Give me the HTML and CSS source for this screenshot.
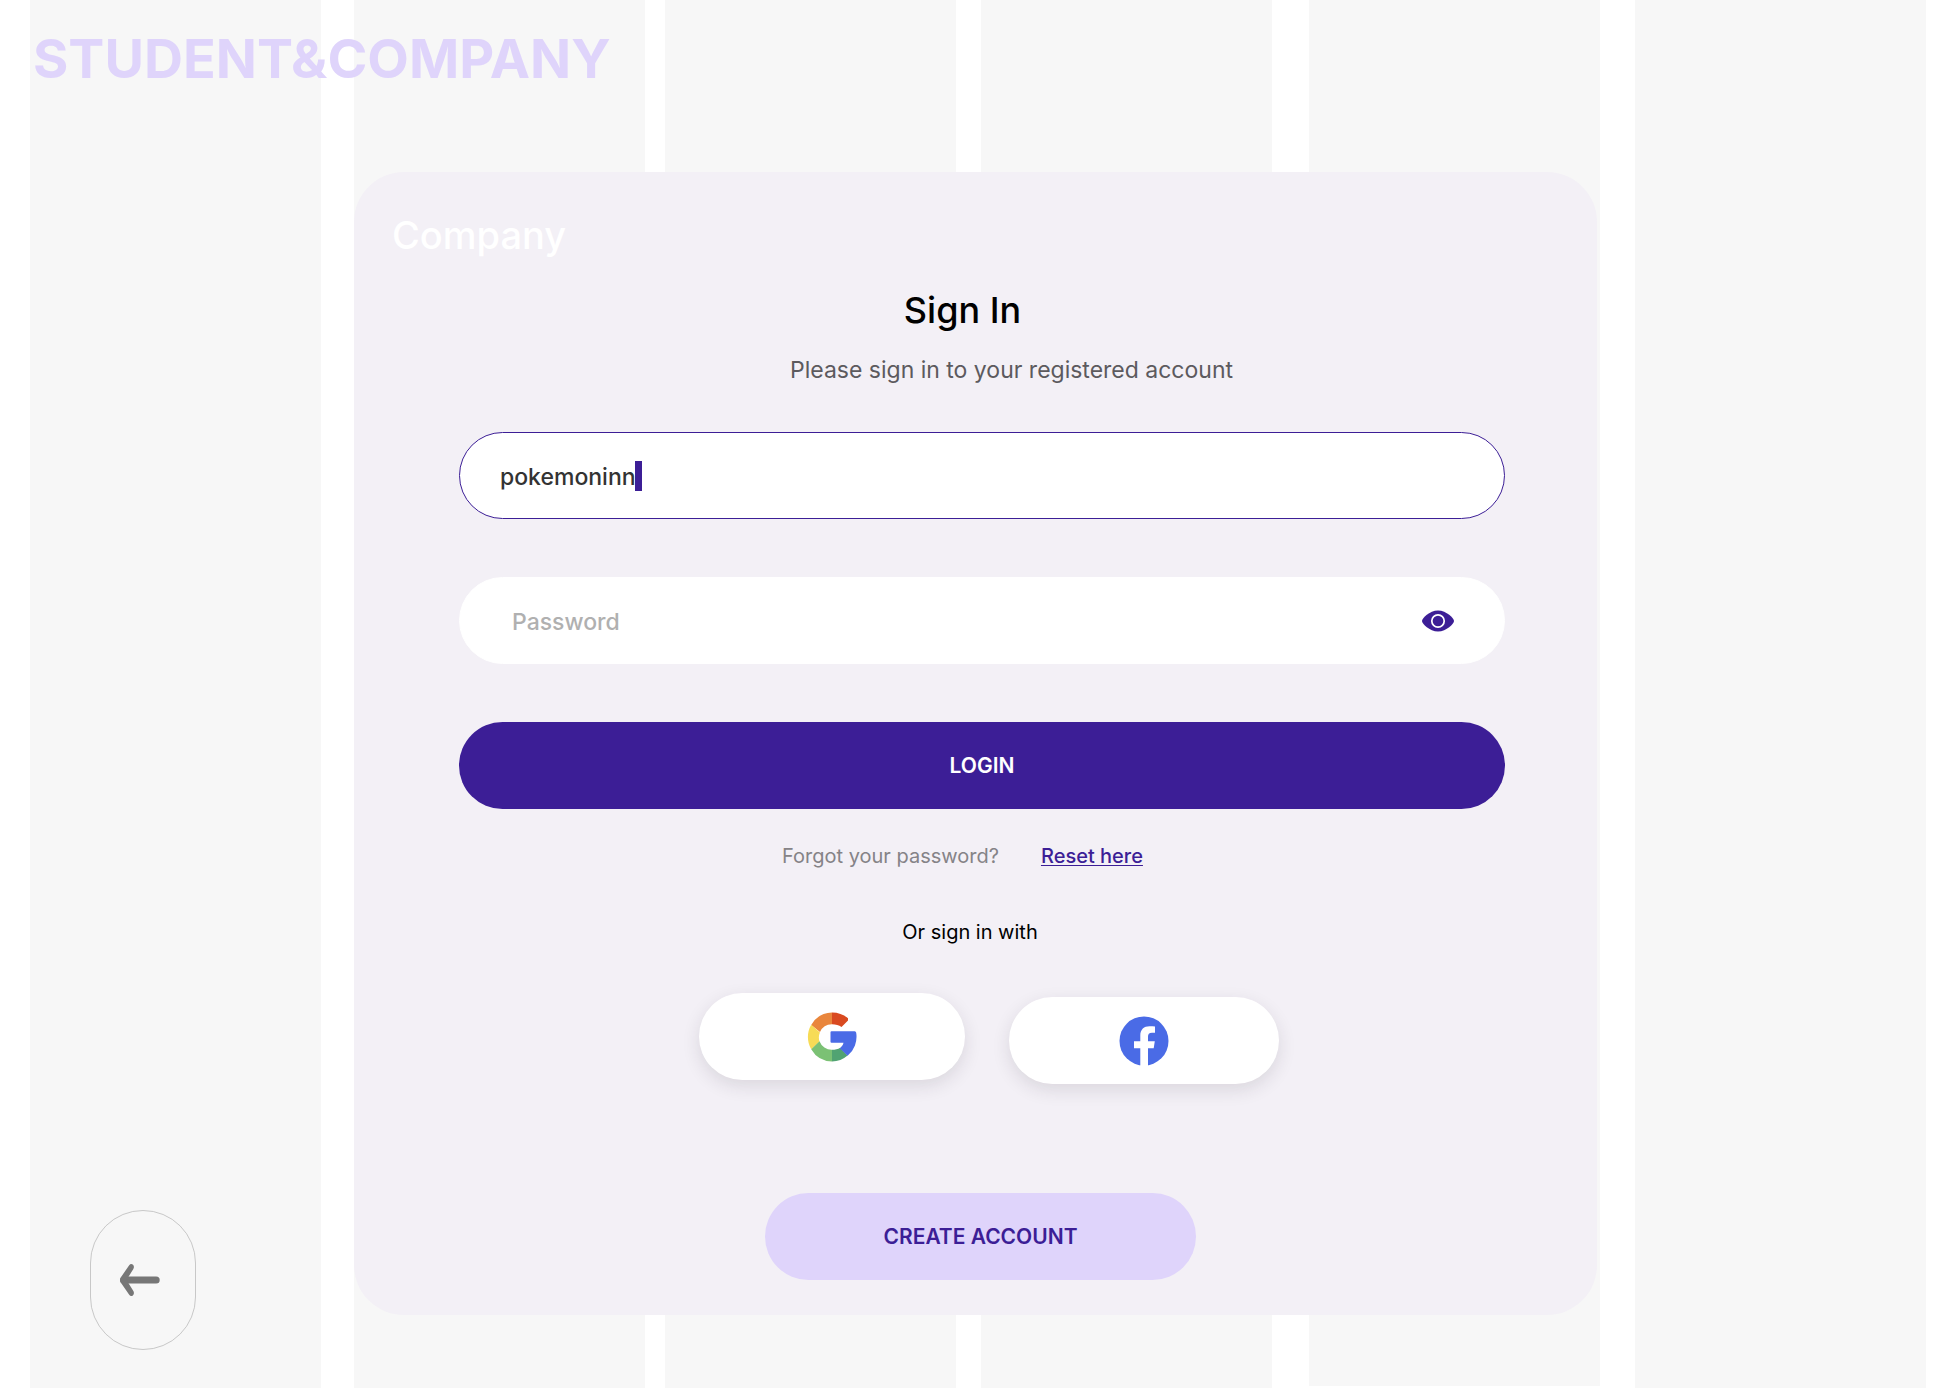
FILE: index.html
```html
<!DOCTYPE html>
<html lang="en">
<head>
<meta charset="utf-8">
<meta name="viewport" content="width=device-width, initial-scale=1">
<title>Student&amp;Company – Sign In</title>
<link rel="stylesheet" href="styles.css">
</head>
<body>
<div class="page">
  <div class="stripe stripe-1"></div>
  <div class="stripe stripe-2"></div>
  <div class="stripe stripe-3"></div>
  <div class="stripe stripe-4"></div>
  <div class="stripe stripe-5"></div>
  <div class="stripe stripe-6"></div>

  <header class="header"><span class="brand">STUDENT&amp;COMPANY</span></header>

  <a class="back" href="#" aria-label="Back">
    <svg width="40" height="34" viewBox="0 0 40 34">
      <path d="M3.500 17H36.200" fill="none" stroke="#777" stroke-width="7" stroke-linecap="round"/>
      <path d="M9.200 2.200C10.200 .6 12 .6 13 1.800C14.200 3 14.200 4.800 13.200 6.200L6.500 17L13.200 27.800C14.200 29.200 14.200 31 13 32.200C12 33.400 10.200 33.400 9.200 31.800L.9 19.800C-.1 18 -.1 16 .9 14.200Z" fill="#777"/>
    </svg>
  </a>

  <main class="card">
    <p class="account-type">Company</p>
    <h1 class="title">Sign In</h1>
    <p class="subtitle">Please sign in to your registered account</p>

    <form class="form">
      <div class="field field-active">
        <input class="input" type="text" aria-label="Username" value="pokemoninn">
        <span class="caret"></span>
      </div>
      <div class="field field-password">
        <input class="input" type="password" aria-label="Password" placeholder="Password">
        <button class="reveal" type="button" aria-label="Show password">
          <svg width="32" height="22" viewBox="0 0 32 22">
            <path d="M0 11C0 8.600 7.500 .5 16 .5S32 8.600 32 11S24.500 21.500 16 21.500S0 13.400 0 11Z" fill="#3c1e96"/>
            <circle cx="16" cy="11" r="6.200" fill="none" stroke="#fff" stroke-width="1.700"/>
          </svg>
        </button>
      </div>
      <button class="button button-primary" type="submit">LOGIN</button>
    </form>

    <p class="forgot">Forgot your password? <a class="reset" href="#">Reset here</a></p>
    <p class="alternative">Or sign in with</p>

    <div class="socials">
      <button class="button social google" type="button" aria-label="Sign in with Google">
        <svg width="50" height="50" viewBox="0 0 50 50">
          <path d="M25 .5A24.500 24.500 0 0 1 41 6.300V8.500L34.500 15C32 13.100 28.700 12.200 25 12.200Z" fill="#d94a20"/>
          <path d="M25 .5V12.200A13 13 0 0 0 13 20L4.200 13A24.500 24.500 0 0 1 25 .5Z" fill="#e9863c"/>
          <path d="M4.200 12.700L12.900 20.500A12.800 12.800 0 0 0 12.500 29.500L4.200 37.300A24.500 24.500 0 0 1 4.200 12.700Z" fill="#f7db56"/>
          <path d="M4.200 37.300L12.500 29.300A13 13 0 0 0 25 37.800V49.500A24.500 24.500 0 0 1 4.200 37.300Z" fill="#7bc174"/>
          <path d="M25 37.800C28.200 37.800 31 37.200 33.200 35.700L40.600 43.500A24.500 24.500 0 0 1 25 49.500Z" fill="#51a372"/>
          <path d="M24.500 19.300H47.700Q49 19.300 49.200 20.800A24.500 24.500 0 0 1 40.600 43.700L32.800 36.200C34.700 34.800 36 33 36.500 30.700H24.500Q23.500 30.700 23.500 29.700V20.300Q23.500 19.300 24.500 19.300Z" fill="#4a6be6"/>
        </svg>
      </button>
      <button class="button social facebook" type="button" aria-label="Sign in with Facebook">
        <svg width="50" height="50" viewBox="0 0 50 50">
          <circle cx="25" cy="25" r="24.500" fill="#4a6be6"/>
          <path d="M21.300 50V32.300H15V25.300H21.300V19.500C21.300 13.300 25 10.200 30.500 10.200C32.700 10.200 34.500 10.400 36 10.600V16.800H33C30 16.800 29 18.200 29 20.500V25.300H35.800L34.700 32.300H29V50Z" fill="#fff"/>
        </svg>
      </button>
    </div>

    <button class="button button-secondary" type="button">CREATE ACCOUNT</button>
  </main>
</div>
</body>
</html>
```
FILE: styles.css
```css
* {
  box-sizing: border-box;
}

body {
  margin: 0;
  background: #fff;
  font-family: Inter, "Liberation Sans", sans-serif;
}

p,
h1 {
  margin: 0;
}

svg {
  display: block;
}

.page {
  display: grid;
  grid-template-columns: 30fr 291fr 33fr 291fr 20fr 291fr 25fr 291fr 37fr 291fr 35fr 291fr 24fr;
  grid-template-rows: 172px auto 1fr;
  min-height: 100vh;
}

/* Background stripes share the grid with the content */
.stripe {
  grid-row: 1 / 4;
  background: #f7f7f7;
}

.stripe-1 { grid-column: 2; }
.stripe-2 { grid-column: 4; }
.stripe-3 { grid-column: 6; }
.stripe-4 { grid-column: 8; }
.stripe-5 { grid-column: 10; margin-bottom: 2px; }
.stripe-6 { grid-column: 12; }

.header {
  grid-column: 2 / 13;
  grid-row: 1;
  padding: 23px 3px;
}

.brand {
  display: block;
  color: #dfd4fb;
  font-size: 54px;
  font-weight: 700;
  line-height: 72px;
}

.back {
  grid-column: 2;
  grid-row: 2 / 4;
  align-self: end;
  display: flex;
  align-items: center;
  width: 106px;
  height: 140px;
  margin: 0 0 38px 60px;
  padding-left: 29px;
  border: 1px solid #c8c8c8;
  border-radius: 53px;
}

.card {
  grid-column: 4 / 11;
  grid-row: 2;
  display: flex;
  flex-direction: column;
  margin-right: 3px;
  padding: 36px 0 35px;
  border-radius: 50px;
  background: #f3f0f6;
}

.account-type {
  padding-left: 38px;
  color: #fff;
  font-size: 38px;
  font-weight: 500;
  line-height: 54px;
}

.title {
  margin-top: 22px;
  padding-right: 26px;
  color: #000;
  font-size: 36px;
  font-weight: 500;
  line-height: 52px;
  text-align: center;
}

.subtitle {
  margin-top: 16px;
  padding-left: 72px;
  color: #5c5a5e;
  font-size: 23px;
  line-height: 36px;
  text-align: center;
}

.form {
  display: flex;
  flex-direction: column;
  gap: 58px;
  margin: 44px 92px 0 105px;
}

.field {
  position: relative;
  display: flex;
  align-items: center;
  height: 87px;
  padding: 0 50px 0 40px;
  border: 1px solid #fff;
  border-radius: 44px;
  background: #fff;
}

.field-active {
  border-color: #3c1e96;
}

.field-password {
  padding-left: 52px;
}

.input {
  flex: 1;
  min-width: 0;
  height: 48px;
  padding: 3px 0 1px;
  border: 0;
  outline: 0;
  background: transparent;
  color: #333;
  font: 500 23px/44px Inter, "Liberation Sans", sans-serif;
}

.input::placeholder {
  color: #b0b0b0;
  opacity: 1;
}

.caret {
  position: absolute;
  top: 28px;
  left: 175px;
  width: 7px;
  height: 30px;
  background: #3c1e96;
}

.reveal {
  padding: 0;
  border: 0;
  background: none;
}

.button {
  height: 87px;
  border: 0;
  border-radius: 44px;
  font: 600 21px/32px Inter, "Liberation Sans", sans-serif;
}

.button-primary {
  background: #3c1e96;
  color: #fff;
}

.forgot {
  display: flex;
  justify-content: center;
  gap: 42px;
  margin-top: 32px;
  padding-right: 26px;
  color: #858387;
  font-size: 20px;
  line-height: 30px;
}

.reset {
  color: #3c1e96;
  font-weight: 500;
  text-decoration-thickness: 1px;
  text-underline-offset: 2px;
}

.alternative {
  margin-top: 46px;
  padding-right: 11px;
  color: #000;
  font-size: 20px;
  line-height: 30px;
  text-align: center;
}

.socials {
  display: flex;
  justify-content: center;
  align-items: flex-start;
  gap: 44px;
  margin-top: 46px;
  padding-left: 27px;
}

.social {
  display: flex;
  justify-content: center;
  align-items: center;
  background: #fff;
  box-shadow: 0 6px 18px rgba(40, 30, 50, 0.12);
}

.google {
  width: 266px;
}

.facebook {
  width: 270px;
  margin-top: 4px;
}

.button-secondary {
  align-self: center;
  width: 431px;
  margin: 109px 0 0 10px;
  background: #dfd4fb;
  color: #3c1e96;
}
```
